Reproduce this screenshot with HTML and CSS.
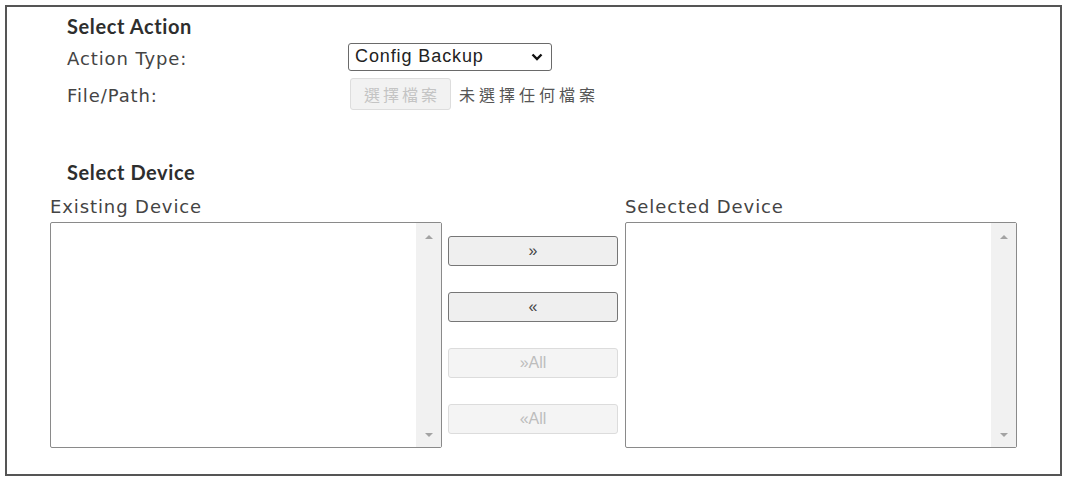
FILE: index.html
```html
<!DOCTYPE html>
<html>
<head>
<meta charset="utf-8">
<link rel="stylesheet" href="styles.css">
</head>
<body>
<div class="panel">
  <div class="section">
    <div class="heading">Select Action</div>
    <div class="row">
      <div class="label">Action Type:</div>
      <div class="select">
        <span>Config Backup</span>
        <svg class="chev" width="12" height="8" viewBox="0 0 12 8"><path d="M1.5 1.5 L6 6 L10.5 1.5" fill="none" stroke="#111" stroke-width="2.4"/></svg>
      </div>
    </div>
    <div class="row">
      <div class="label">File/Path:</div>
      <div class="file">
        <span class="filebtn">選擇檔案</span>
        <span class="nofile">未選擇任何檔案</span>
      </div>
    </div>
  </div>
  <div class="section2">
    <div class="heading">Select Device</div>
  </div>
  <div class="devices">
    <div class="col">
      <div class="dlabel">Existing Device</div>
      <div class="list">
        <div class="scroll"><span class="up"></span><span class="down"></span></div>
      </div>
    </div>
    <div class="buttons">
      <div class="btn">»</div>
      <div class="btn">«</div>
      <div class="btn disabled">»All</div>
      <div class="btn disabled">«All</div>
    </div>
    <div class="col">
      <div class="dlabel">Selected Device</div>
      <div class="list">
        <div class="scroll"><span class="up"></span><span class="down"></span></div>
      </div>
    </div>
  </div>
</div>
</body>
</html>
```
FILE: styles.css
```css
html, body { margin: 0; padding: 0; background: #fff; }
body { font-family: "DejaVu Sans", Verdana, sans-serif; color: #444; }
.panel {
  margin: 5px;
  width: 1057px;
  height: 471px;
  box-sizing: border-box;
  border: 2px solid #555;
}
.section { padding: 7px 0 0 60px; }
.heading {
  font-family: Lato, "Liberation Sans", sans-serif;
  font-weight: 700;
  font-size: 20px;
  letter-spacing: 0.6px;
  color: #2e2e2e;
  line-height: 24px;
}
.row { display: flex; align-items: center; height: 37px; }
.label { width: 281px; font-size: 18px; letter-spacing: 0.9px; color: #444; padding-top: 3px; }
.select {
  width: 204px; height: 28px; box-sizing: border-box;
  border: 1px solid #6a6a6a; border-radius: 3px;
  display: flex; align-items: center; justify-content: space-between;
  padding: 0 8px 0 6px;
  font-family: "Liberation Sans", Arial, sans-serif; font-size: 18px; letter-spacing: 0.9px; color: #222;
}
.file { display: flex; align-items: center; }
.filebtn {
  width: 101px; height: 32px; box-sizing: border-box;
  border: 1px solid #ddd; border-radius: 3px; background: #f2f2f2;
  display: flex; align-items: center; justify-content: center;
  font-family: "Noto Sans CJK TC", sans-serif; font-size: 16px; color: #c4c4c4;
  letter-spacing: 3px; padding-left: 3px;
  margin-left: 2px;
}
.nofile {
  margin-left: 8px;
  font-family: "Noto Sans CJK TC", sans-serif; font-size: 16px; color: #555;
  letter-spacing: 4px;
}
.section2 { padding: 48px 0 0 60px; }
.devices { display: flex; padding-left: 43px; margin-top: 11px; }
.col { display: flex; flex-direction: column; width: 392px; }
.dlabel { font-size: 18px; letter-spacing: 0.9px; color: #444; line-height: 24px; height: 27px; }
.list {
  height: 226px; box-sizing: border-box;
  border: 1px solid #8a8a8a; border-radius: 2px;
  display: flex; justify-content: flex-end;
}
.scroll {
  width: 25px; background: #f1f1f1;
  display: flex; flex-direction: column; justify-content: space-between; align-items: center;
  padding: 12px 0 10px;
}
.up { width: 0; height: 0; border-left: 4px solid transparent; border-right: 4px solid transparent; border-bottom: 4px solid #a3a3a3; }
.down { width: 0; height: 0; border-left: 4px solid transparent; border-right: 4px solid transparent; border-top: 4px solid #a3a3a3; }
.buttons {
  width: 170px; margin: 41px 7px 0 6px;
  display: flex; flex-direction: column; gap: 26px;
}
.btn {
  height: 30px; box-sizing: border-box;
  border: 1px solid #767676; border-radius: 3px; background: #efefef;
  display: flex; align-items: center; justify-content: center;
  font-family: "Liberation Sans", Arial, sans-serif; font-size: 16px; color: #444;
}
.btn.disabled { border-color: #dcdcdc; background: #f4f4f4; color: #bdbdbd; }
```
